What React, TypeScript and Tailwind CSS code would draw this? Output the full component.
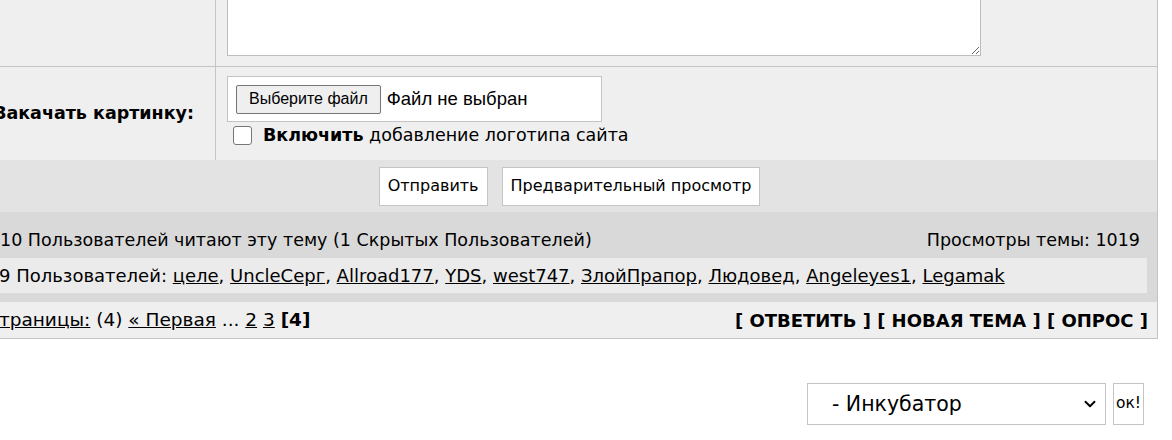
import { ChevronDown } from 'lucide-react'

const verdana = "font-['Verdana','DejaVu_Sans',sans-serif]"
const arial = "font-['Arial','Liberation_Sans',sans-serif]"

const readers = ['целе', 'UncleСерг', 'Allroad177', 'YDS', 'west747', 'ЗлойПрапор', 'Людовед', 'Angeleyes1', 'Legamak']

function ReplyForm() {
  return (
    <div className="border-b border-[#c4c4c4]">
      {/* message body */}
      <div className="flex h-[67px] border-b border-[#c4c4c4]">
        <div className="w-[230px] shrink-0 border-r border-[#c4c4c4]" />
        <div className="flex flex-1 flex-col justify-end overflow-hidden pb-[10px] pl-[11px]">
          <textarea className="h-[80px] w-[754px] shrink-0 border border-[#bdbdbd] bg-white" />
        </div>
      </div>

      {/* image upload */}
      <div className="flex h-[93px]">
        <div className={`flex w-[230px] shrink-0 items-center justify-end border-r border-[#c4c4c4] pr-[21px] text-[17.5px] font-bold text-black ${verdana}`}>
          Закачать картинку:
        </div>
        <div className="flex flex-1 flex-col pl-[11px] pt-[9px]">
          <div className={`flex h-[46px] w-[375px] items-center border border-[#c4c4c4] bg-white pl-[8px] ${arial}`}>
            <button className="h-[29px] rounded-[2px] border border-[#767676] bg-[#efefef] px-[12px] text-[16px] text-black">
              Выберите файл
            </button>
            <span className="ml-[6px] text-[18.5px] text-black">Файл не выбран</span>
          </div>
          <label className={`flex items-center pl-[6px] text-[17.5px] text-black ${verdana}`}>
            <span className="h-[19px] w-[19px] rounded-[3px] border border-[#767676] bg-white" />
            <span className="ml-[11px]">
              <b>Включить</b> добавление логотипа сайта
            </span>
          </label>
        </div>
      </div>

      {/* submit */}
      <div className={`flex h-[52px] items-center justify-center gap-[14px] pr-[4px] bg-[#e3e3e3] text-[16px] text-black ${verdana}`}>
        <button className="h-[39px] border border-[#c4c4c4] bg-white px-[8px]">Отправить</button>
        <button className="h-[39px] border border-[#c4c4c4] bg-white px-[8px]">Предварительный просмотр</button>
      </div>

      {/* who is reading */}
      <div className={`bg-[#d9d9d9] pb-[9px] text-[17.5px] text-black ${verdana}`}>
        <div className="flex h-[46px] items-center justify-between pl-[14px] pr-[17px] pt-[10px]">
          <span>10 Пользователей читают эту тему (1 Скрытых Пользователей)</span>
          <span>Просмотры темы: 1019</span>
        </div>
        <div className="mr-[10px] flex h-[35px] items-center bg-[#ebebeb] pl-[13px] text-[18px]">
          <span>
            9 Пользователей:{' '}
            {readers.map((name, i) => (
              <span key={name}>
                <a className="underline">{name}</a>
                {i < readers.length - 1 ? ', ' : ''}
              </span>
            ))}
          </span>
        </div>
      </div>

      {/* pages and actions */}
      <div className={`flex h-[36px] items-center justify-between bg-[#efefef] pl-0 pr-[9px] text-[18.5px] text-black ${verdana}`}>
        <span>
          <a className="underline">Страницы:</a> (4) <a className="underline">« Первая</a> ... <a className="underline">2</a>{' '}
          <a className="underline">3</a> <b>[4]</b>
        </span>
        <span className="text-[18px] font-bold">[ ОТВЕТИТЬ ] [ НОВАЯ ТЕМА ] [ ОПРОС ]</span>
      </div>
    </div>
  )
}

export default function App() {
  return (
    <div className="min-h-[440px] bg-white">
      <div className="-ml-[14px] w-[1172px] border-r border-[#c4c4c4] bg-[#efefef]">
        <ReplyForm />
      </div>

      {/* forum jump */}
      <div className={`mt-[44px] flex justify-end gap-[7px] pr-[28px] text-black ${verdana}`}>
        <div className="flex h-[42px] w-[299px] items-center justify-between border border-[#c4c4c4] bg-white pl-[24px] pr-[6px] text-[20.5px]">
          <span>- Инкубатор</span>
          <ChevronDown size={18} strokeWidth={2.5} />
        </div>
        <button className="h-[42px] border border-[#c4c4c4] bg-white px-[2px] text-[15.5px]">ок!</button>
      </div>
    </div>
  )
}
